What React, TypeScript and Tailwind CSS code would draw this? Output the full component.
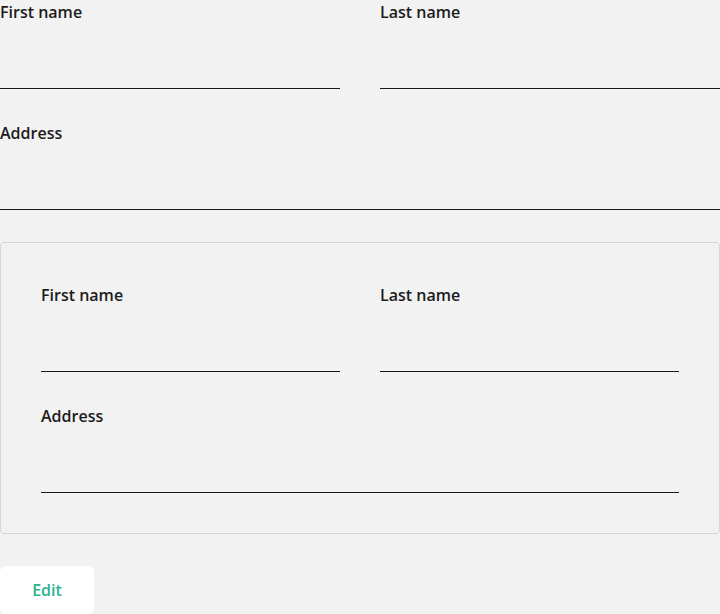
import React from "react";

function Field({ label }: { label: string }) {
  return (
    <div className="flex flex-col">
      <label className="block h-[24px] text-[16px] leading-[24px] font-semibold text-[#1c1c1c]">{label}</label>
      <div className="h-[65px] border-b border-[#1a1a1a]" />
    </div>
  );
}

function FormBlock() {
  return (
    <div className="flex flex-col gap-[32px]">
      <div className="grid grid-cols-2 gap-[40px]">
        <Field label="First name" />
        <Field label="Last name" />
      </div>
      <Field label="Address" />
    </div>
  );
}

export default function App() {
  return (
    <div
      className="min-h-[614px] w-[720px] bg-[#f2f2f2] flex flex-col gap-[32px]"
      style={{ fontFamily: '"Open Sans", sans-serif' }}
    >
      <FormBlock />
      <div className="rounded-[4px] border border-[#d6d6d6] p-[40px]">
        <FormBlock />
      </div>
      <div>
        <button className="h-[48px] w-[94px] rounded-[6px] bg-white text-[16px] font-semibold text-[#2db38e]">
          Edit
        </button>
      </div>
    </div>
  );
}
